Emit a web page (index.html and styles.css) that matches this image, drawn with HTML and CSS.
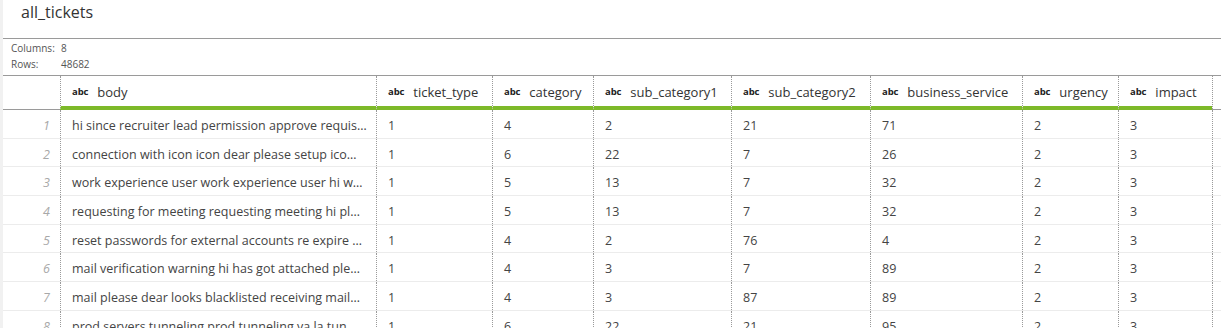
FILE: index.html
```html
<!DOCTYPE html>
<html>
<head>
<meta charset="utf-8">
<link rel="stylesheet" href="styles.css">
</head>
<body>
<div class="page">
  <div class="strip"></div>
  <div class="main">
    <div class="title">all_tickets</div>
    <div class="meta">
      <span>Columns:</span><span>8</span>
      <span>Rows:</span><span>48682</span>
    </div>
    <div class="grid">
      <div class="row head">
        <div class="c num"></div>
        <div class="c h"><b>abc</b><span>body</span></div>
        <div class="c h"><b>abc</b><span>ticket_type</span></div>
        <div class="c h"><b>abc</b><span>category</span></div>
        <div class="c h"><b>abc</b><span>sub_category1</span></div>
        <div class="c h"><b>abc</b><span>sub_category2</span></div>
        <div class="c h"><b>abc</b><span>business_service</span></div>
        <div class="c h"><b>abc</b><span>urgency</span></div>
        <div class="c h"><b>abc</b><span>impact</span></div>
        <div class="c fill"></div>
      </div>
      <div class="row"><div class="c num">1</div><div class="c">hi since recruiter lead permission approve requis…</div><div class="c">1</div><div class="c">4</div><div class="c">2</div><div class="c">21</div><div class="c">71</div><div class="c">2</div><div class="c">3</div><div class="c fill"></div></div>
      <div class="row"><div class="c num">2</div><div class="c">connection with icon icon dear please setup ico…</div><div class="c">1</div><div class="c">6</div><div class="c">22</div><div class="c">7</div><div class="c">26</div><div class="c">2</div><div class="c">3</div><div class="c fill"></div></div>
      <div class="row"><div class="c num">3</div><div class="c">work experience user work experience user hi w…</div><div class="c">1</div><div class="c">5</div><div class="c">13</div><div class="c">7</div><div class="c">32</div><div class="c">2</div><div class="c">3</div><div class="c fill"></div></div>
      <div class="row"><div class="c num">4</div><div class="c">requesting for meeting requesting meeting hi pl…</div><div class="c">1</div><div class="c">5</div><div class="c">13</div><div class="c">7</div><div class="c">32</div><div class="c">2</div><div class="c">3</div><div class="c fill"></div></div>
      <div class="row"><div class="c num">5</div><div class="c">reset passwords for external accounts re expire …</div><div class="c">1</div><div class="c">4</div><div class="c">2</div><div class="c">76</div><div class="c">4</div><div class="c">2</div><div class="c">3</div><div class="c fill"></div></div>
      <div class="row"><div class="c num">6</div><div class="c">mail verification warning hi has got attached ple…</div><div class="c">1</div><div class="c">4</div><div class="c">3</div><div class="c">7</div><div class="c">89</div><div class="c">2</div><div class="c">3</div><div class="c fill"></div></div>
      <div class="row"><div class="c num">7</div><div class="c">mail please dear looks blacklisted receiving mail…</div><div class="c">1</div><div class="c">4</div><div class="c">3</div><div class="c">87</div><div class="c">89</div><div class="c">2</div><div class="c">3</div><div class="c fill"></div></div>
      <div class="row"><div class="c num">8</div><div class="c">prod servers tunneling prod tunneling va la tun…</div><div class="c">1</div><div class="c">6</div><div class="c">22</div><div class="c">21</div><div class="c">95</div><div class="c">2</div><div class="c">3</div><div class="c fill"></div></div>
    </div>
  </div>
</div>
</body>
</html>
```

FILE: styles.css
```css
html, body {
  margin: 0;
  padding: 0;
  background: #ffffff;
  overflow: hidden;
}
body {
  font-family: "Open Sans", "Noto Sans", sans-serif;
  color: #333333;
  width: 1221px;
  height: 328px;
}
.page {
  display: flex;
  height: 328px;
  overflow: hidden;
}
.strip {
  width: 3px;
  flex: 0 0 3px;
  background: #f1f1f1;
}
.main {
  flex: 1;
  display: flex;
  flex-direction: column;
  min-width: 0;
}
.main > * {
  flex-shrink: 0;
}
.title {
  height: 39px;
  box-sizing: border-box;
  padding: 0 0 0 18px;
  font-size: 16px;
  line-height: 24px;
  color: #333333;
  border-bottom: 1px solid #9a9a9a;
}
.meta {
  height: 37px;
  box-sizing: border-box;
  padding: 1px 0 0 8px;
  display: grid;
  grid-template-columns: 50px auto;
  grid-auto-rows: 16px;
  font-size: 10px;
  line-height: 16px;
  color: #555555;
  border-bottom: 1px solid #9a9a9a;
  justify-content: start;
}
.grid {
  display: flex;
  flex-direction: column;
}
.row {
  display: grid;
  grid-template-columns: 57px 316px 116px 101px 138px 139px 152px 96px 94px 1fr;
  height: 28.7px;
  flex-shrink: 0;
  box-sizing: border-box;
  border-bottom: 1px solid #ececec;
  font-size: 12.5px;
  color: #444444;
}
.row.head {
  height: 34px;
  border-bottom: 1px solid #9a9a9a;
}
.c {
  box-sizing: border-box;
  border-left: 1px dotted #9a9a9a;
  padding: 3px 0 0 11px;
  display: flex;
  align-items: center;
  white-space: nowrap;
  overflow: hidden;
}
.c.num {
  border-left: none;
  justify-content: flex-end;
  padding: 3px 10px 0 0;
  font-style: italic;
  color: #a8a8a8;
}
.c.fill {
  padding: 0;
}
.row:not(.head) .c.fill {
  border-left: 1px dotted #9a9a9a;
}
.head .c.h {
  padding-top: 1px;
  margin-bottom: -1px;
  border-bottom: 4px solid #7db929;
  font-size: 13px;
  color: #333333;
}
.head .c.h b {
  font-size: 9.5px;
  font-weight: 700;
  color: #222222;
  margin-right: 9px;
  letter-spacing: -0.1px;
}
```
